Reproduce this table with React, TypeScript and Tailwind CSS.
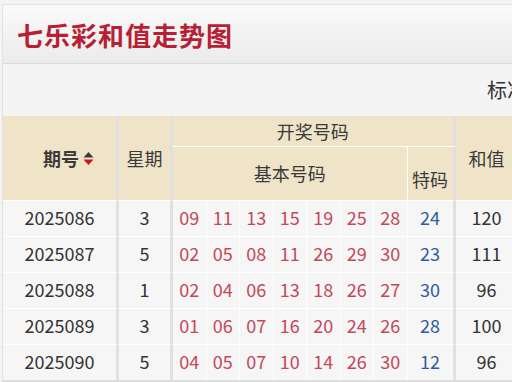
const rows = [
  { issue: "2025086", week: "3", nums: ["09", "11", "13", "15", "19", "25", "28"], sp: "24", sum: "120" },
  { issue: "2025087", week: "5", nums: ["02", "05", "08", "11", "26", "29", "30"], sp: "23", sum: "111" },
  { issue: "2025088", week: "1", nums: ["02", "04", "06", "13", "18", "26", "27"], sp: "30", sum: "96" },
  { issue: "2025089", week: "3", nums: ["01", "06", "07", "16", "20", "24", "26"], sp: "28", sum: "100" },
  { issue: "2025090", week: "5", nums: ["04", "05", "07", "10", "14", "26", "30"], sp: "12", sum: "96" },
];

const cols = "grid grid-cols-[116px_54px_repeat(7,33.5px)_48px_70px]";

const SortIcon = () => (
  <svg width="11" height="15" viewBox="0 0 11 15" className="ml-1">
    <path d="M5.5 1 L10.5 6.5 L0.5 6.5 Z" fill="#3a3a3a" />
    <path d="M5.5 14 L10.5 8.5 L0.5 8.5 Z" fill="#c8161d" />
  </svg>
);

export default function App() {
  return (
    <div
      className="h-[382px] w-[512px] overflow-hidden bg-[#f4f4f4] pt-1 pl-[2px]"
      style={{ fontFamily: '"Microsoft YaHei", "Noto Sans CJK SC", "Noto Sans", sans-serif' }}
    >
      <div className="w-[600px] border-l border-t border-[#e2e2e2]">
        <div className="flex h-[59px] items-center border-b border-[#dcdcdc] bg-gradient-to-b from-[#fafafa] to-[#ebebeb] pl-[14px]">
          <h1 className="text-[26px] font-bold tracking-[1px] text-[#b81f34]">七乐彩和值走势图</h1>
        </div>
        <div className="flex h-[52px] items-center pl-[484px] text-[20px] text-[#333]">
          <span>标准</span>
        </div>

        <div className={`${cols} grid-rows-[31px_53px] text-[18px] text-[#3a3a3a]`}>
          <div className="row-span-2 flex items-center justify-center border-r-[3px] border-[#e0e0e0] bg-[#efe4c8] pl-[18px] font-bold">
            期号
            <SortIcon />
          </div>
          <div className="row-span-2 flex items-center justify-center border-r-[3px] border-[#e0e0e0] bg-[#efe4c8]">
            星期
          </div>
          <div className="col-span-8 flex items-center justify-center border-b border-r-[3px] border-b-white border-r-[#e0e0e0] bg-[#efe4c8]">
            开奖号码
          </div>
          <div className="col-start-11 row-span-2 row-start-1 flex items-center justify-center bg-[#efe4c8] pr-[8px]">
            和值
          </div>
          <div className="col-span-7 col-start-3 flex items-center justify-center border-r border-white bg-[#efe4c8] pb-[1px]">
            基本号码
          </div>
          <div className="col-start-10 flex items-end justify-center border-r-[3px] border-[#e0e0e0] bg-[#efe4c8] pb-[7px]">
            特码
          </div>
        </div>

        <div className="border-b-2 border-[#dedede]">
          {rows.map((r) => (
            <div key={r.issue} className={`${cols} h-9 text-[18px]`}>
              <div className="flex items-center justify-center border-r-[3px] border-t border-t-white border-r-[#e0e0e0] bg-[#f6f6f6] pb-[2px] text-[#333]">
                {r.issue}
              </div>
              <div className="flex items-center justify-center border-r-[3px] border-t border-t-white border-r-[#e0e0e0] bg-[#f6f6f6] pb-[2px] text-[#333]">
                {r.week}
              </div>
              {r.nums.map((n, i) => (
                <div
                  key={i}
                  className="flex items-center justify-center border-r border-t border-white bg-[#f6f6f6] pb-[2px] text-[#c4475a]"
                >
                  {n}
                </div>
              ))}
              <div className="flex items-center justify-center border-r-[3px] border-t border-t-white border-r-[#e0e0e0] bg-[#f6f6f6] pb-[2px] text-[#2f5c9c]">
                {r.sp}
              </div>
              <div className="flex items-center justify-center border-t border-white bg-[#f6f6f6] pb-[2px] pr-[8px] text-[#333]">
                {r.sum}
              </div>
            </div>
          ))}
        </div>
      </div>
    </div>
  );
}
